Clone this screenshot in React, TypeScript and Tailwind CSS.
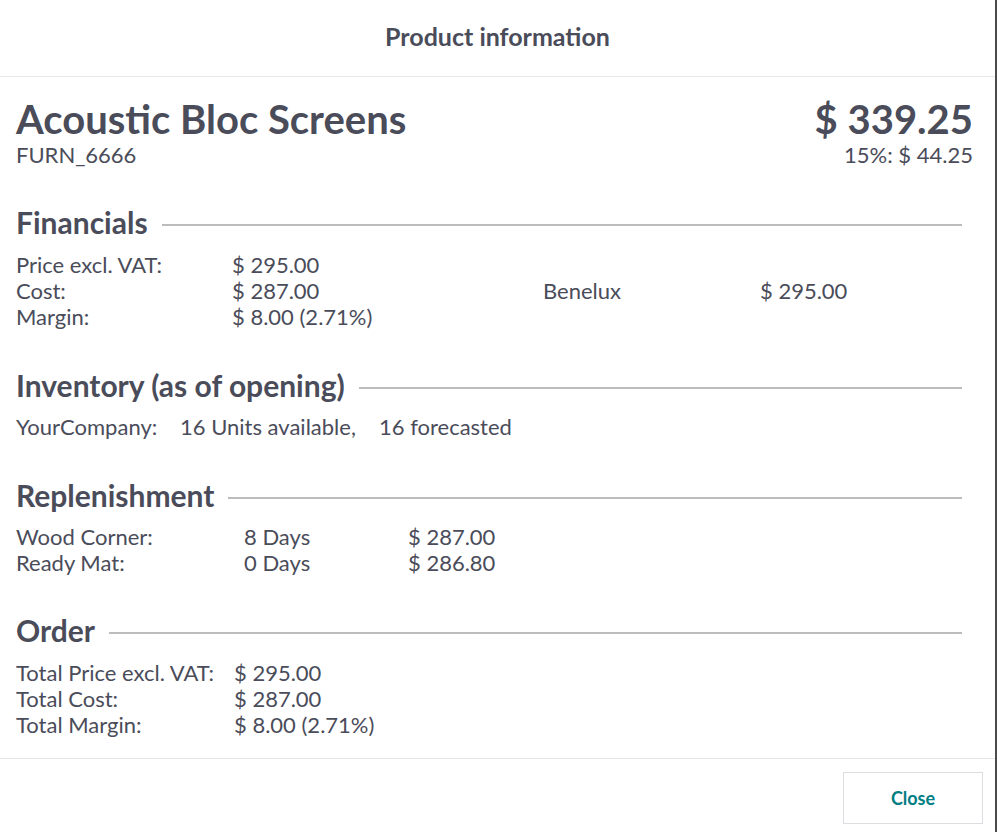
import React from "react";

const Heading = ({ children }: { children: React.ReactNode }) => (
  <div className="flex items-center h-[34px] mr-[11px]">
    <div className="text-[30px] font-bold leading-[34px] whitespace-nowrap">{children}</div>
    <div className="flex-1 h-[2px] bg-[#bcbcbc] ml-[14px] mt-[5px]" />
  </div>
);

export default function App() {
  return (
    <div
      className="w-[997px] h-[832px] flex bg-white text-[#4a4c5a] overflow-hidden"
      style={{ fontFamily: "Lato, 'Open Sans', sans-serif" }}
    >
      <div className="w-[995px] h-full flex flex-col bg-white">
        <div className="h-[77px] shrink-0 flex items-center justify-center border-b border-[#e7e7e9]">
          <div className="text-[25px] font-bold pb-[3px]">Product information</div>
        </div>
        <div className="flex-1 pl-[16px] pr-[22px] pt-[19px]">
          <div className="flex justify-between">
            <div>
              <div className="text-[40px] font-bold leading-[46px]">Acoustic Bloc Screens</div>
              <div className="text-[22px] leading-[26px]">FURN_6666</div>
            </div>
            <div className="text-right">
              <div className="text-[40px] font-bold leading-[46px]">$ 339.25</div>
              <div className="text-[22px] leading-[26px]">15%: $ 44.25</div>
            </div>
          </div>

          <div className="mt-[37px]">
            <Heading>Financials</Heading>
            <div className="mt-[13px] flex items-center text-[22px] leading-[26px]">
              <div className="flex">
                <div className="w-[216px]">
                  <div>Price excl. VAT:</div>
                  <div>Cost:</div>
                  <div>Margin:</div>
                </div>
                <div className="w-[311px]">
                  <div>$ 295.00</div>
                  <div>$ 287.00</div>
                  <div>$ 8.00 (2.71%)</div>
                </div>
              </div>
              <div className="flex">
                <div className="w-[217px]">Benelux</div>
                <div>$ 295.00</div>
              </div>
            </div>
          </div>

          <div className="mt-[38px]">
            <Heading>Inventory (as of opening)</Heading>
            <div className="mt-[12px] flex text-[22px] leading-[26px]">
              <div className="w-[164px]">YourCompany:</div>
              <div className="w-[199px]">16 Units available,</div>
              <div>16 forecasted</div>
            </div>
          </div>

          <div className="mt-[38px]">
            <Heading>Replenishment</Heading>
            <div className="mt-[12px] flex text-[22px] leading-[26px]">
              <div className="w-[228px]">
                <div>Wood Corner:</div>
                <div>Ready Mat:</div>
              </div>
              <div className="w-[164px]">
                <div>8 Days</div>
                <div>0 Days</div>
              </div>
              <div>
                <div>$ 287.00</div>
                <div>$ 286.80</div>
              </div>
            </div>
          </div>

          <div className="mt-[37px]">
            <Heading>Order</Heading>
            <div className="mt-[13px] flex text-[22px] leading-[26px]">
              <div className="w-[218px]">
                <div>Total Price excl. VAT:</div>
                <div>Total Cost:</div>
                <div>Total Margin:</div>
              </div>
              <div>
                <div>$ 295.00</div>
                <div>$ 287.00</div>
                <div>$ 8.00 (2.71%)</div>
              </div>
            </div>
          </div>
        </div>
        <div className="h-[74px] shrink-0 border-t border-[#e7e7e9] flex justify-end pr-[12px] pt-[13px]">
          <button className="w-[140px] h-[52px] border border-[#dcdde0] bg-white text-[#017e84] text-[18px] font-bold">
            Close
          </button>
        </div>
      </div>
      <div className="w-[2px] h-full bg-[#4a4a4a]" />
    </div>
  );
}
